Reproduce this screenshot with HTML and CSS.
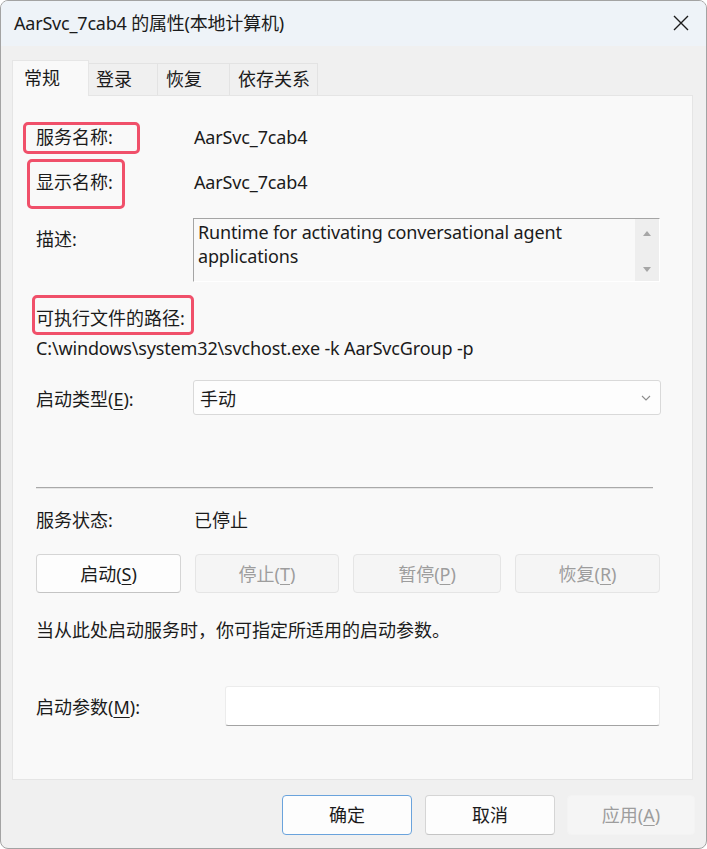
FILE: index.html
```html
<!DOCTYPE html>
<html lang="zh-CN">
<head>
<meta charset="utf-8">
<title>AarSvc_7cab4 的属性(本地计算机)</title>
<link rel="stylesheet" href="styles.css">
</head>
<body>
<div class="window">
  <div class="titlebar">
    <span class="title">AarSvc_7cab4 的属性(本地计算机)</span>
    <svg class="close" width="16" height="16" viewBox="0 0 16 16" aria-hidden="true">
      <path d="M1 1 L15 15 M15 1 L1 15" stroke="#1b1b1b" stroke-width="1.4" fill="none"/>
    </svg>
  </div>
  <div class="body">
    <div class="tabs">
      <div class="tab active">常规</div>
      <div class="tab t2">登录</div>
      <div class="tab t3">恢复</div>
      <div class="tab t4">依存关系</div>
    </div>
    <div class="panel">
      <div class="row r-name"><span class="label">服务名称:</span><span class="value latin">AarSvc_7cab4</span></div>
      <div class="row r-display"><span class="label">显示名称:</span><span class="value latin">AarSvc_7cab4</span></div>
      <div class="row r-desc">
        <span class="label desc-label">描述:</span>
        <div class="descbox">
          <div class="desctext latin">Runtime for activating conversational agent applications</div>
          <div class="scrollbar">
            <span class="arrow up"></span>
            <span class="arrow down"></span>
          </div>
        </div>
      </div>
      <div class="pathlabel">可执行文件的路径:</div>
      <div class="path latin">C:\windows\system32\svchost.exe -k AarSvcGroup -p</div>
      <div class="row r-type">
        <span class="label">启动类型(<u>E</u>):</span>
        <div class="select">
          <span>手动</span>
          <svg width="10" height="6" viewBox="0 0 10 6" aria-hidden="true"><path d="M1 1 L5 5 L9 1" stroke="#8c8c8c" stroke-width="1.1" fill="none"/></svg>
        </div>
      </div>
      <div class="separator"></div>
      <div class="row r-status"><span class="label">服务状态:</span><span class="value">已停止</span></div>
      <div class="btnrow">
        <div class="btn">启动(<u>S</u>)</div>
        <div class="btn disabled">停止(<u>T</u>)</div>
        <div class="btn disabled">暂停(<u>P</u>)</div>
        <div class="btn disabled">恢复(<u>R</u>)</div>
      </div>
      <div class="hint">当从此处启动服务时，你可指定所适用的启动参数。</div>
      <div class="row r-param">
        <span class="label">启动参数(<u>M</u>):</span>
        <div class="input"></div>
      </div>
    </div>
    <div class="footer">
      <div class="btn fbtn default">确定</div>
      <div class="btn fbtn">取消</div>
      <div class="btn fbtn disabled nb">应用(<u>A</u>)</div>
    </div>
  </div>
  <div class="mark m1"></div>
  <div class="mark m2"></div>
  <div class="mark m3"></div>
</div>
</body>
</html>
```
FILE: styles.css
```css
* { box-sizing: border-box; }
html, body { margin: 0; padding: 0; background: #ffffff; }
body {
  font-family: "Noto Sans", "Noto Sans CJK SC", sans-serif;
  font-size: 18px;
  color: #1b1b1b;
}
u { text-underline-offset: 3px; text-decoration-thickness: 1px; }
.latin { letter-spacing: -0.15px; }

.window {
  position: relative;
  width: 707px;
  height: 849px;
  border: 1px solid #a3a3a3;
  border-radius: 8px;
  overflow: hidden;
  background: #f0f0f0;
  display: flex;
  flex-direction: column;
}

.titlebar {
  height: 45px;
  background: #eef3f8;
  display: flex;
  align-items: center;
  justify-content: space-between;
  padding: 0 17px 0 13px;
  flex: none;
}
.title { line-height: 24px; padding-bottom: 1px; letter-spacing: -0.2px; }
.close { display: block; margin-top: -1px; }

.body {
  flex: 1;
  display: flex;
  flex-direction: column;
  padding: 14px 0 0 11px;
}

.tabs {
  display: flex;
  align-items: flex-end;
  height: 35px;
  position: relative;
  z-index: 1;
}
.tab {
  height: 32px;
  border: 1px solid #e3e3e3;
  border-bottom: none;
  background: #f0f0f0;
  line-height: 30px;
  padding-left: 7px;
  margin-left: -1px;
}
.tab.active {
  height: 36px;
  width: 77px;
  margin-left: 0;
  margin-bottom: -1px;
  background: #f9f9f9;
  padding-left: 11px;
  line-height: 34px;
  border-color: #e6e6e6;
}
.tab.t2 { width: 69px; padding-left: 7px; margin-left: 0; border-left: none; }
.tab.t3 { width: 73px; padding-left: 8px; }
.tab.t4 { width: 89px; padding-left: 8px; }

.panel {
  width: 681px;
  height: 685px;
  background: #f9f9f9;
  border: 1px solid #e5e5e5;
  padding: 0 31px 0 23px;
}

.row { display: flex; align-items: flex-start; }
.label { width: 157px; flex: none; line-height: 24px; }
.value { line-height: 24px; padding-left: 1px; }

.r-name { margin-top: 29px; }
.r-display { margin-top: 21px; }
.r-desc { margin-top: 24px; }
.desc-label { margin-top: 9px; }
.descbox {
  width: 467px;
  height: 64px;
  border-top: 1px solid #a5a5a5;
  border-left: 1px solid #a5a5a5;
  border-right: 1px solid #ffffff;
  border-bottom: 1px solid #ffffff;
  display: flex;
}
.desctext {
  flex: 1;
  line-height: 24px;
  padding: 1px 0 0 4px;
}
.scrollbar {
  width: 24px;
  background: #eeeeee;
  position: relative;
  display: flex;
  flex-direction: column;
  justify-content: space-between;
  align-items: center;
  padding: 12px 0 9px;
}
.arrow {
  width: 0; height: 0;
  border-left: 4.5px solid transparent;
  border-right: 4.5px solid transparent;
}
.arrow.up { border-bottom: 5px solid #a6a6a6; }
.arrow.down { border-top: 5px solid #a6a6a6; }

.pathlabel { margin-top: 24px; line-height: 24px; }
.path { margin-top: 6px; line-height: 24px; }

.r-type { margin-top: 20px; align-items: center; }
.r-type .label { margin-top: 3px; }
.select {
  width: 468px;
  height: 35px;
  background: #fdfdfd;
  border: 1px solid #d9d9d9;
  border-radius: 3px;
  display: flex;
  align-items: center;
  justify-content: space-between;
  padding: 0 9px 0 6px;
}

.separator {
  margin-top: 72px;
  width: 617px;
  height: 2px;
  background: #a9a9a9;
  border-bottom: 1px solid #e6e6e6;
}

.r-status { margin-top: 19px; }

.btnrow {
  margin-top: 22px;
  display: grid;
  grid-template-columns: 145px 144px 148px 145px;
  column-gap: 14px;
}
.btn {
  height: 39px;
  background: #fdfdfd;
  border: 1px solid #d5d5d5;
  border-bottom-color: #c4c4c4;
  border-radius: 4px;
  display: flex;
  align-items: center;
  justify-content: center;
  line-height: 24px;
}
.btn.disabled {
  background: #f5f5f5;
  border-color: #e5e5e5;
  color: #9d9d9d;
}

.hint { margin-top: 25px; line-height: 24px; }

.r-param { margin-top: 44px; align-items: center; }
.r-param .label { width: 189px; margin-top: 2px; }
.input {
  width: 435px;
  height: 40px;
  background: #ffffff;
  border: 1px solid #ececec;
  border-bottom: 1px solid #a3a3a3;
  border-radius: 3px;
}

.footer {
  display: flex;
  justify-content: flex-end;
  padding: 15px 11px 0 0;
  gap: 13px;
}
.fbtn { width: 130px; height: 40px; }
.fbtn.default { border: 1px solid #6aa3dc; }
.fbtn.nb { width: 128px; border-color: #f3f3f3; margin-left: -1px; }

.mark {
  position: absolute;
  border: 3px solid #f0506a;
  border-radius: 5px;
  pointer-events: none;
}
.m1 { left: 22px; top: 121px; width: 117px; height: 32px; }
.m2 { left: 26px; top: 158px; width: 98px; height: 50px; }
.m3 { left: 31px; top: 294px; width: 162px; height: 40px; }
```
